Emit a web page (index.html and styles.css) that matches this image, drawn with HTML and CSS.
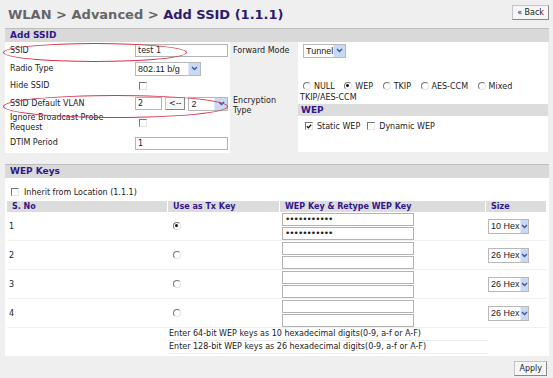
FILE: index.html
```html
<!DOCTYPE html>
<html lang="en">
<head>
  <meta charset="UTF-8">
  <title>WLAN Advanced - Add SSID</title>
  <link rel="stylesheet" href="styles.css">
</head>
<body>
  <div class="page">
    <div class="titlebar">
      <h1><span class="crumb">WLAN &gt; Advanced &gt; </span>Add SSID (1.1.1)</h1>
      <span class="btn">&laquo; Back</span>
    </div>

    <div class="section">
      <div class="section-head">Add SSID</div>
      <div class="ssid-body">
        <div class="form-left">
          <div class="lbl">SSID</div>
          <div class="fld"><span class="txt wide">test 1</span></div>

          <div class="lbl">Radio Type</div>
          <div class="fld"><span class="sel radio-type"><span class="val">802.11 b/g</span><span class="arr"><svg width="7" height="5" viewBox="0 0 7 5"><path d="M1 1l2.5 2.5L6 1" fill="none" stroke="#3d5a94" stroke-width="1.4"/></svg></span></span></div>

          <div class="lbl">Hide SSID</div>
          <div class="fld"><span class="cb"></span></div>

          <div class="lbl">SSID Default VLAN</div>
          <div class="fld vlan">
            <span class="txt short">2</span>
            <span class="btn small">&lt;--</span>
            <span class="sel vlan-sel"><span class="val">2</span><span class="arr"><svg width="7" height="5" viewBox="0 0 7 5"><path d="M1 1l2.5 2.5L6 1" fill="none" stroke="#3d5a94" stroke-width="1.4"/></svg></span></span>
          </div>

          <div class="lbl">Ignore Broadcast Probe<br>Request</div>
          <div class="fld"><span class="cb"></span></div>

          <div class="lbl">DTIM Period</div>
          <div class="fld"><span class="txt wide">1</span></div>
        </div>

        <div class="form-right">
          <div class="lbl">Forward Mode</div>
          <div class="val-cell"><span class="sel tunnel"><span class="val">Tunnel</span><span class="arr"><svg width="7" height="5" viewBox="0 0 7 5"><path d="M1 1l2.5 2.5L6 1" fill="none" stroke="#3d5a94" stroke-width="1.4"/></svg></span></span></div>

          <div class="lbl">Encryption<br>Type</div>
          <div class="val-cell enc">
            <div class="enc-opts">
              <span class="rd"></span>NULL
              <span class="rd on"></span>WEP
              <span class="rd"></span>TKIP
              <span class="rd"></span>AES-CCM
              <span class="rd"></span>Mixed<br>TKIP/AES-CCM
            </div>
            <div class="sub-head">WEP</div>
            <div class="wep-opts">
              <span class="cb on"><svg width="7" height="7" viewBox="0 0 7 7"><path d="M1 3.2l1.8 1.9L6 1.5" fill="none" stroke="#111" stroke-width="1.5"/></svg></span>Static WEP
              <span class="cb"></span>Dynamic WEP
            </div>
          </div>
        </div>
      </div>
    </div>

    <div class="section keys">
      <div class="section-head">WEP Keys</div>
      <div class="keys-body">
        <div class="inherit"><span class="cb"></span>Inherit from Location (1.1.1)</div>
        <div class="key-table">
          <div class="th">S. No</div>
          <div class="th">Use as Tx Key</div>
          <div class="th">WEP Key &amp; Retype WEP Key</div>
          <div class="th">Size</div>

          <div class="td">1</div>
          <div class="td"><span class="rd on"></span></div>
          <div class="td pair"><span class="txt key">&bull;&bull;&bull;&bull;&bull;&bull;&bull;&bull;&bull;&bull;&bull;</span><span class="txt key">&bull;&bull;&bull;&bull;&bull;&bull;&bull;&bull;&bull;&bull;&bull;</span></div>
          <div class="td"><span class="sel size"><span class="val">10 Hex</span><span class="arr"><svg width="7" height="5" viewBox="0 0 7 5"><path d="M1 1l2.5 2.5L6 1" fill="none" stroke="#3d5a94" stroke-width="1.4"/></svg></span></span></div>

          <div class="td">2</div>
          <div class="td"><span class="rd"></span></div>
          <div class="td pair"><span class="txt key"></span><span class="txt key"></span></div>
          <div class="td"><span class="sel size"><span class="val">26 Hex</span><span class="arr"><svg width="7" height="5" viewBox="0 0 7 5"><path d="M1 1l2.5 2.5L6 1" fill="none" stroke="#3d5a94" stroke-width="1.4"/></svg></span></span></div>

          <div class="td">3</div>
          <div class="td"><span class="rd"></span></div>
          <div class="td pair"><span class="txt key"></span><span class="txt key"></span></div>
          <div class="td"><span class="sel size"><span class="val">26 Hex</span><span class="arr"><svg width="7" height="5" viewBox="0 0 7 5"><path d="M1 1l2.5 2.5L6 1" fill="none" stroke="#3d5a94" stroke-width="1.4"/></svg></span></span></div>

          <div class="td">4</div>
          <div class="td"><span class="rd"></span></div>
          <div class="td pair"><span class="txt key"></span><span class="txt key"></span></div>
          <div class="td"><span class="sel size"><span class="val">26 Hex</span><span class="arr"><svg width="7" height="5" viewBox="0 0 7 5"><path d="M1 1l2.5 2.5L6 1" fill="none" stroke="#3d5a94" stroke-width="1.4"/></svg></span></span></div>

          <div class="note">Enter 64-bit WEP keys as 10 hexadecimal digits(0-9, a-f or A-F)</div>
          <div class="note">Enter 128-bit WEP keys as 26 hexadecimal digits(0-9, a-f or A-F)</div>
        </div>
      </div>
    </div>

    <div class="footer"><span class="btn">Apply</span></div>

    <div class="mark mark-ssid"></div>
    <div class="mark mark-vlan"></div>
  </div>
</body>
</html>
```

FILE: styles.css
```css
body {
  margin: 0;
  background: #efefef;
  font-family: "DejaVu Sans", Verdana, sans-serif;
  font-size: 8px;
  color: #222;
}

.page {
  position: relative;
  padding: 5px 4px 0 5px;
}

.titlebar {
  display: flex;
  justify-content: space-between;
  align-items: flex-start;
  height: 23px;
}

h1 {
  margin: 2px 0 0 3px;
  font-size: 13px;
  line-height: 16px;
  color: #2f1a72;
  white-space: nowrap;
}

h1 .crumb {
  color: #666;
}

.btn {
  display: inline-block;
  background: #f6f6f6;
  border: 1px solid #c4c4c4;
  border-right-color: #888;
  border-bottom-color: #888;
  padding: 0 4px;
  height: 13px;
  line-height: 13px;
  font-size: 8px;
  color: #222;
}

.section-head {
  background: #d9d9d9;
  border-top: 1px solid #bdbdbd;
  height: 13px;
  line-height: 13px;
  padding-left: 5px;
  color: #32168a;
  font-weight: bold;
  font-size: 9px;
}

.ssid-body {
  display: flex;
  align-items: flex-start;
  height: 122px;
}

.form-left {
  display: grid;
  grid-template-columns: 130px 95px;
  grid-template-rows: 17px 19px 16px 19px 20px 20px;
  background: #fff;
}

.lbl {
  padding-left: 5px;
  display: flex;
  align-items: center;
  line-height: 10px;
}

.fld {
  display: flex;
  align-items: center;
}

.txt {
  display: inline-block;
  box-sizing: border-box;
  height: 13px;
  line-height: 11px;
  border: 1px solid #b3b3b3;
  background: #fff;
  padding-left: 2px;
  font-size: 8px;
}

.txt.wide {
  width: 93px;
}

.txt.short {
  width: 27px;
}

.vlan {
  gap: 3px;
}

.btn.small {
  height: 11px;
  line-height: 11px;
  padding: 0 3px;
}

.sel {
  display: inline-flex;
  box-sizing: border-box;
  height: 14px;
  border: 1px solid #b8b8b8;
  background: #fff;
  align-items: stretch;
  white-space: nowrap;
}

.sel .val {
  flex: 1;
  padding-left: 2px;
  line-height: 12px;
  font-family: "Liberation Sans", Arial, sans-serif;
  font-size: 9px;
}

.sel .arr {
  width: 12px;
  background: #c9d8f4;
  border-left: 1px solid #e2e9f8;
  display: flex;
  align-items: center;
  justify-content: center;
}

.radio-type {
  width: 66px;
}

.radio-type .val {
  flex: none;
  width: 50px;
}

.vlan-sel {
  width: 40px;
}

.tunnel {
  width: 43px;
  margin-left: 5px;
}

.size {
  width: 41px;
  height: 15px;
}

.size .val {
  line-height: 13px;
}

.size .arr {
  width: 10px;
}

.cb {
  display: inline-flex;
  align-items: center;
  justify-content: center;
  box-sizing: border-box;
  width: 8px;
  height: 8px;
  border-top: 1px solid #777;
  border-left: 1px solid #777;
  border-right: 1px solid #e6e6e6;
  border-bottom: 1px solid #e6e6e6;
  margin: 0 4px;
  vertical-align: -1px;
}

.cb svg {
  display: block;
}

.rd {
  display: inline-block;
  box-sizing: border-box;
  width: 8px;
  height: 8px;
  border-radius: 50%;
  border: 1px solid #e4e4e4;
  border-top-color: #777;
  border-left-color: #777;
  margin: 0 3px 0 7px;
  vertical-align: -1px;
  position: relative;
}

.rd.on::after {
  content: "";
  position: absolute;
  left: 1px;
  top: 1px;
  width: 3px;
  height: 3px;
  border-radius: 50%;
  background: #111;
}

.form-right {
  display: grid;
  grid-template-columns: 65px 250px;
  grid-template-rows: 17px 93px;
  margin-left: 3px;
}

.form-right .lbl {
  padding-left: 0;
}

.val-cell {
  background: #fff;
  display: flex;
  align-items: center;
}

.enc {
  flex-direction: column;
  align-items: stretch;
  padding-top: 22px;
}

.enc-opts {
  line-height: 11px;
  padding-left: 2px;
}

.enc-opts .rd:first-child {
  margin-left: 3px;
}

.sub-head {
  background: #dcdcdc;
  color: #32168a;
  font-weight: bold;
  font-size: 9px;
  height: 12px;
  line-height: 12px;
  padding-left: 3px;
  margin-top: 1px;
}

.wep-opts {
  display: flex;
  align-items: center;
  height: 20px;
}

.wep-opts .cb {
  margin: 0 4px 0 7px;
}

.keys {
  margin-top: 0;
}

.keys-body {
  background: #fff;
  padding: 7px 2px 2px 2px;
}

.inherit {
  display: flex;
  align-items: center;
  height: 14px;
  margin-bottom: 2px;
}

.inherit .cb {
  margin: 0 5px 0 4px;
}

.key-table {
  display: grid;
  grid-template-columns: 161px 112px 206px 61px;
}

.th {
  background: #dcdcdc;
  color: #32168a;
  font-weight: bold;
  height: 11px;
  line-height: 11px;
  padding-left: 5px;
  margin-right: 1px;
}

.td {
  height: 28px;
  border-bottom: 1px solid #f0f0f0;
  display: flex;
  align-items: center;
  padding-left: 2px;
}

.td .rd {
  margin-left: 3px;
}

.td.pair {
  flex-direction: column;
  align-items: flex-start;
  justify-content: center;
  gap: 1px;
}

.txt.key {
  width: 132px;
  line-height: 10px;
  letter-spacing: -1px;
  font-size: 9px;
}

.note {
  grid-column: 2 / 5;
  margin-right: 59px;
  height: 12px;
  line-height: 12px;
  border-bottom: 1px solid #ececec;
  padding-left: 1px;
}

.footer {
  display: flex;
  justify-content: flex-end;
  padding: 5px 2px 0 0;
}

.mark {
  position: absolute;
  border: 1px solid #d8344a;
  border-radius: 50%;
}

.mark-ssid {
  left: 3px;
  top: 43px;
  width: 182px;
  height: 17px;
}

.mark-vlan {
  left: 3px;
  top: 95px;
  width: 223px;
  height: 21px;
}
```
